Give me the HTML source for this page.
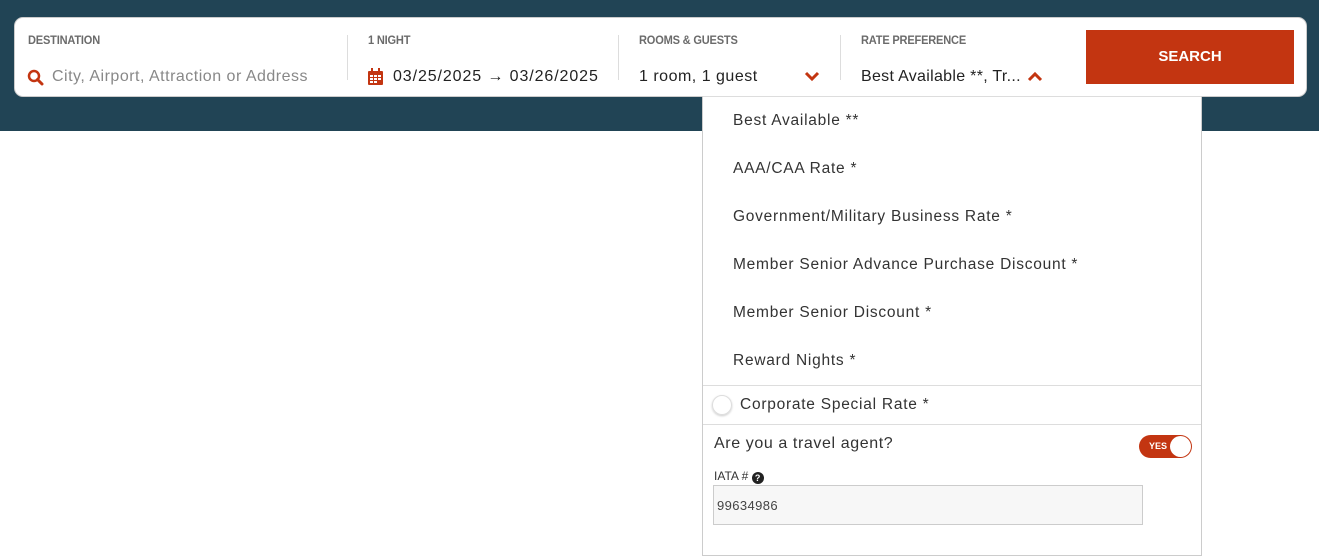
<!DOCTYPE html>
<html><head><style>
*{box-sizing:border-box;margin:0;padding:0}
body{width:1319px;height:531px;background:#fff;font-family:"Liberation Sans",sans-serif;position:relative;overflow:hidden}
.band{position:absolute;left:0;top:0;width:1319px;height:131px;background:#214455}
.card{position:absolute;left:14px;top:17px;width:1293px;height:80px;background:#fff;border-radius:9px;border:1px solid #ccc}
.lbl{position:absolute;top:15px;font-size:12px;font-weight:bold;color:#6b6b6b;letter-spacing:-0.2px;transform:scaleX(0.92);transform-origin:left}
.val{position:absolute;top:50px;font-size:16px;color:#222;letter-spacing:0.5px}
.div{position:absolute;top:17px;width:1px;height:45px;background:#ddd}
.btn{position:absolute;left:1071px;top:12px;width:208px;height:54px;background:#c33511;color:#fff;font-weight:bold;font-size:15px;text-align:center;line-height:54px}
.dd{position:absolute;left:702px;top:96px;width:500px;height:460px;background:#fff;border:1px solid #ccc;border-top:1px solid #ddd}
.it{position:absolute;left:30px;font-size:15.5px;color:#333;letter-spacing:0.75px}
.hr{position:absolute;left:0;width:498px;height:1px;background:#ddd}
</style></head><body>
<div class="band"></div>
<div class="card">
<div class="lbl" style="left:13px">DESTINATION</div>
<svg style="position:absolute;left:12px;top:51px" width="17" height="17" viewBox="0 0 17 17"><circle cx="7" cy="7" r="5" fill="none" stroke="#c33511" stroke-width="2.5"/><path d="M10.5 10.5L15 15" stroke="#c33511" stroke-width="3" stroke-linecap="round"/></svg>
<div class="val" style="left:37px;color:#888">City, Airport, Attraction or Address</div>
<div class="div" style="left:332px"></div>
<div class="lbl" style="left:353px">1 NIGHT</div>
<svg style="position:absolute;left:353px;top:50px" width="15" height="17" viewBox="0 0 15 17"><rect x="0" y="3" width="15" height="14" rx="1" fill="#c33511"/><rect x="3" y="0" width="2" height="4" fill="#c33511"/><rect x="10" y="0" width="2" height="4" fill="#c33511"/><g fill="#fff"><rect x="2" y="7" width="3" height="2"/><rect x="6" y="7" width="3" height="2"/><rect x="10" y="7" width="3" height="2"/><rect x="2" y="10" width="3" height="2"/><rect x="6" y="10" width="3" height="2"/><rect x="10" y="10" width="3" height="2"/><rect x="2" y="13" width="3" height="2"/><rect x="6" y="13" width="3" height="2"/></g></svg>
<div class="val" style="left:378px;letter-spacing:0.9px">03/25/2025 → 03/26/2025</div>
<div class="div" style="left:603px"></div>
<div class="lbl" style="left:624px">ROOMS &amp; GUESTS</div>
<div class="val" style="left:624px">1 room, 1 guest</div>
<svg style="position:absolute;left:789px;top:53px" width="16" height="11" viewBox="0 0 16 11"><path d="M2 2L8 8L14 2" fill="none" stroke="#c33511" stroke-width="3"/></svg>
<div class="div" style="left:825px"></div>
<div class="lbl" style="left:846px">RATE PREFERENCE</div>
<div class="val" style="left:846px;letter-spacing:0.3px">Best Available **, Tr...</div>
<svg style="position:absolute;left:1012px;top:53px" width="16" height="11" viewBox="0 0 16 11"><path d="M2 9L8 3L14 9" fill="none" stroke="#c33511" stroke-width="3"/></svg>
<div class="btn">SEARCH</div>
</div>
<div class="dd">
<div class="it" style="top:15px">Best Available **</div>
<div class="it" style="top:63px">AAA/CAA Rate *</div>
<div class="it" style="top:111px">Government/Military Business Rate *</div>
<div class="it" style="top:159px">Member Senior Advance Purchase Discount *</div>
<div class="it" style="top:207px">Member Senior Discount *</div>
<div class="it" style="top:255px">Reward Nights *</div>
<div class="hr" style="top:288px"></div>
<div style="position:absolute;left:9px;top:298px;width:20px;height:20px;border-radius:50%;border:1px solid #ddd;box-shadow:0 1px 2px #ccc"></div>
<div class="it" style="left:37px;top:299px">Corporate Special Rate *</div>
<div class="hr" style="top:327px"></div>
<div class="it" style="left:11px;top:338px;font-size:16px;letter-spacing:0.6px">Are you a travel agent?</div>
<div style="position:absolute;left:436px;top:338px;width:53px;height:23px;border-radius:12px;background:#c33511"><span style="position:absolute;left:10px;top:6px;font-size:9px;font-weight:bold;color:#fff">YES</span><div style="position:absolute;right:1px;top:1px;width:21px;height:21px;border-radius:50%;background:#fff"></div></div>
<div style="position:absolute;left:11px;top:372px;font-size:12px;color:#333">IATA # <span style="display:inline-block;width:12px;height:12px;border-radius:50%;background:#222;color:#fff;font-size:9px;font-weight:bold;text-align:center;line-height:12px;vertical-align:-1px">?</span></div>
<div style="position:absolute;left:10px;top:388px;width:430px;height:40px;background:#f7f7f7;border:1px solid #ccc;font-size:13px;color:#444;padding:12px 3px;letter-spacing:0.4px">99634986</div>
</div>
</body></html>
